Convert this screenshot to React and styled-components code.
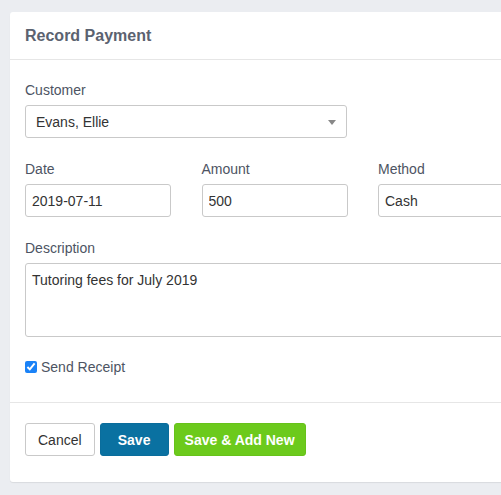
import styled, { createGlobalStyle } from 'styled-components'

const GlobalStyle = createGlobalStyle`
    html, body {
        margin: 0;
        padding: 0;
        background: #ebedf1;
        font-family: "Liberation Sans", Arial, sans-serif;
        font-size: 14px;
        color: #333;
    }
    * { box-sizing: border-box; }
`

const Page = styled.div`
    padding: 12px 0 12px 10px;
    overflow: hidden;
    width: 501px;
    height: 495px;
`

const Card = styled.div`
    width: 560px;
    background: #fff;
    border-radius: 3px 0 0 3px;
    box-shadow: 0 1px 1px rgba(0, 0, 0, 0.08);
`

const Header = styled.div`
    height: 48px;
    padding: 0 15px;
    display: flex;
    align-items: center;
    border-bottom: 1px solid #e6e6e6;
`

const Title = styled.h3`
    margin: 0;
    font-size: 16px;
    font-weight: bold;
    color: #5b6270;
`

const Body = styled.div`
    padding: 22px 15px 27px;
    border-bottom: 1px solid #e6e6e6;
`

const Group = styled.div`
    margin-bottom: ${p => p.$gap || '23px'};
`

const Label = styled.label`
    display: block;
    line-height: 16px;
    margin-bottom: 7px;
    color: #4d5463;
`

const Row = styled.div`
    display: grid;
    grid-template-columns: 146px 146px 146px;
    column-gap: 30.5px;
`

const Input = styled.input`
    display: block;
    width: 100%;
    height: 33px;
    padding: 0 6px;
    border: 1px solid #c9c9c9;
    border-radius: 3px;
    font: inherit;
    color: #333;
    background: #fff;
    outline: none;
`

const SelectBox = styled.div`
    position: relative;
    width: 322px;
    height: 33px;
    border: 1px solid #c9c9c9;
    border-radius: 3px;
    display: flex;
    align-items: center;
    padding: 0 10px;
`

const Caret = styled.span`
    position: absolute;
    right: 10px;
    top: 14px;
    width: 0;
    height: 0;
    border-left: 4px solid transparent;
    border-right: 4px solid transparent;
    border-top: 5px solid #888;
`

const TextArea = styled.textarea`
    display: block;
    width: 100%;
    height: 74px;
    padding: 7px 6px;
    border: 1px solid #c9c9c9;
    border-radius: 3px;
    font: inherit;
    line-height: 18px;
    color: #333;
    resize: none;
    outline: none;
`

const CheckRow = styled.label`
    display: flex;
    align-items: center;
    gap: 4px;
    line-height: 16px;
    color: #4d5463;
`

const Check = styled.input`
    margin: 0;
    width: 12px;
    height: 12px;
    accent-color: #1a82f7;
`

const Footer = styled.div`
    padding: 20px 15px 26px;
    display: flex;
    gap: 5px;
`

const Button = styled.button`
    height: 33px;
    min-width: 69px;
    padding: 0 ${p => (p.$variant === 'success' ? '10px' : '12px')};
    border-radius: 3px;
    font: inherit;
    font-weight: ${p => (p.$variant === 'default' ? 'normal' : 'bold')};
    color: ${p => (p.$variant === 'default' ? '#333' : '#fff')};
    border: 1px solid ${p =>
        p.$variant === 'primary' ? '#0a6d9c' : p.$variant === 'success' ? '#67c21a' : '#c9c9c9'};
    background: ${p =>
        p.$variant === 'primary' ? '#0a71a1' : p.$variant === 'success' ? '#6cca1c' : '#fff'};
`

export default function App() {
    return (
        <Page>
            <GlobalStyle />
            <Card>
                <Header>
                    <Title>Record Payment</Title>
                </Header>
                <Body>
                    <Group>
                        <Label>Customer</Label>
                        <SelectBox>
                            Evans, Ellie
                            <Caret />
                        </SelectBox>
                    </Group>
                    <Group>
                        <Row>
                            <div>
                                <Label>Date</Label>
                                <Input defaultValue="2019-07-11" />
                            </div>
                            <div>
                                <Label>Amount</Label>
                                <Input defaultValue="500" />
                            </div>
                            <div>
                                <Label>Method</Label>
                                <Input defaultValue="Cash" />
                            </div>
                        </Row>
                    </Group>
                    <Group $gap="22px">
                        <Label>Description</Label>
                        <TextArea defaultValue="Tutoring fees for July 2019" />
                    </Group>
                    <CheckRow>
                        <Check type="checkbox" defaultChecked />
                        Send Receipt
                    </CheckRow>
                </Body>
                <Footer>
                    <Button $variant="default">Cancel</Button>
                    <Button $variant="primary">Save</Button>
                    <Button $variant="success">Save &amp; Add New</Button>
                </Footer>
            </Card>
        </Page>
    )
}
